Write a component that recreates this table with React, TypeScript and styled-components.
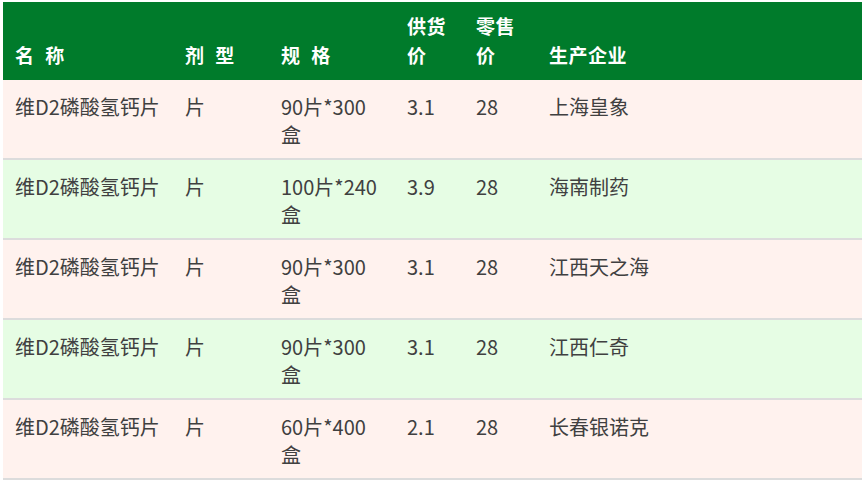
import styled, {createGlobalStyle} from "styled-components";

const GlobalStyle = createGlobalStyle`
  body {
    margin: 0;
    background: #ffffff;
    font-family: "Noto Sans CJK SC", "Noto Sans", sans-serif;
  }
`;

const Wrap = styled.div`
  padding: 2px 3px 0 3px;
`;

const Table = styled.table`
  width: 859px;
  border-collapse: collapse;
  table-layout: fixed;
`;

const HeadCell = styled.th<{$w?: number}>`
  box-sizing: border-box;
  width: ${(p) => (p.$w ? `${p.$w}px` : "auto")};
  background-color: #007b2b;
  color: #ffffff;
  font-size: 19px;
  font-weight: 700;
  line-height: 29px;
  text-align: left;
  vertical-align: bottom;
  padding: 8px 12px 11px 12px;
  height: 78px;
  letter-spacing: 0.5px;
  word-spacing: 6px;
`;

const Row = styled.tr<{$alt: boolean}>`
  background-color: ${(p) => (p.$alt ? "#e6fde4" : "#fff2ee")};
  border-bottom: 2px solid #dcdcdc;
`;

const Cell = styled.td`
  color: #404040;
  font-size: 20px;
  line-height: 28px;
  vertical-align: top;
  padding: 13px 12px 0 12px;
  height: 65px;
  word-break: break-all;
`;

const columns = [
  {title: "名 称", w: 170},
  {title: "剂 型", w: 96},
  {title: "规 格", w: 126},
  {title: "供货价", w: 69},
  {title: "零售价", w: 73},
  {title: "生产企业"},
];

const rows = [
  {name: "维D2磷酸氢钙片", form: "片", spec: "90片*300盒", supply: "3.1", retail: "28", maker: "上海皇象"},
  {name: "维D2磷酸氢钙片", form: "片", spec: "100片*240盒", supply: "3.9", retail: "28", maker: "海南制药"},
  {name: "维D2磷酸氢钙片", form: "片", spec: "90片*300盒", supply: "3.1", retail: "28", maker: "江西天之海"},
  {name: "维D2磷酸氢钙片", form: "片", spec: "90片*300盒", supply: "3.1", retail: "28", maker: "江西仁奇"},
  {name: "维D2磷酸氢钙片", form: "片", spec: "60片*400盒", supply: "2.1", retail: "28", maker: "长春银诺克"},
];

export default function App() {
  return (
    <>
      <GlobalStyle />
      <Wrap>
        <Table>
          <thead>
            <tr>
              {columns.map((c) => (
                <HeadCell key={c.title} $w={c.w}>
                  {c.title}
                </HeadCell>
              ))}
            </tr>
          </thead>
          <tbody>
            {rows.map((r, i) => (
              <Row key={i} $alt={i % 2 === 1}>
                <Cell>{r.name}</Cell>
                <Cell>{r.form}</Cell>
                <Cell>{r.spec}</Cell>
                <Cell>{r.supply}</Cell>
                <Cell>{r.retail}</Cell>
                <Cell>{r.maker}</Cell>
              </Row>
            ))}
          </tbody>
        </Table>
      </Wrap>
    </>
  );
}
